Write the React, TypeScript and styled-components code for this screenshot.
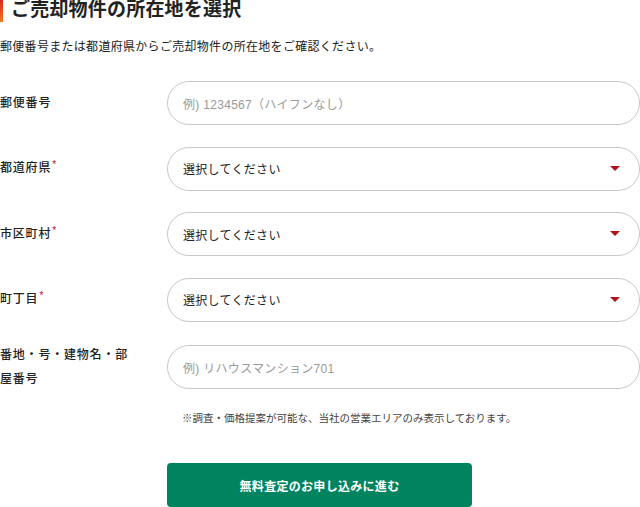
import React from "react";
import styled, { createGlobalStyle } from "styled-components";

const Global = createGlobalStyle`
  html, body { margin: 0; padding: 0; background: #fff; }
  body {
    font-family: "Liberation Sans", "Noto Sans CJK JP", sans-serif;
    color: #333;
    -webkit-font-smoothing: antialiased;
  }
  * { box-sizing: border-box; }
`;

const Page = styled.div`
  width: 640px;
  height: 507px;
  overflow: hidden;
  display: flex;
  flex-direction: column;
`;

const Heading = styled.h2`
  margin: 0;
  height: 22px;
  display: flex;
  align-items: flex-start;
  padding-left: 8px;
  border-left: 3px solid;
  border-image: linear-gradient(to bottom, #d7261f, #ef7d1a) 1;
  font-size: 19px;
  line-height: 19px;
  font-weight: 700;
  color: #222;
  letter-spacing: 0.2px;
`;

const Lead = styled.p`
  margin: 16px 0 0;
  font-size: 12px;
  line-height: 18px;
  letter-spacing: 0.3px;
  color: #222;
`;

const Rows = styled.div`
  margin-top: 25px;
  display: flex;
  flex-direction: column;
  gap: 21.5px;
`;

const Row = styled.div`
  display: flex;
  align-items: center;
`;

const Label = styled.label`
  width: 136px;
  flex: 0 0 136px;
  margin-right: 31px;
  font-size: 12px;
  line-height: 24px;
  letter-spacing: 0.8px;
  font-weight: 500;
  color: #222;
`;

const Req = styled.span`
  color: #d0021b;
  font-size: 10px;
  position: relative;
  top: -4px;
  margin-left: 1px;
`;

const FieldBox = styled.div`
  position: relative;
  flex: 1;
  height: 44px;
  border: 1px solid #c8c8c8;
  border-radius: 22px;
  display: flex;
  align-items: center;
  padding: 0 15px;
  font-size: 12px;
  letter-spacing: 0.3px;
`;

const Placeholder = styled.span`
  color: #9a9a9a;
`;

const Value = styled.span`
  color: #222;
`;

const Arrow = styled.span`
  position: absolute;
  right: 19px;
  top: 50%;
  margin-top: -3px;
  width: 0;
  height: 0;
  border-left: 5px solid transparent;
  border-right: 5px solid transparent;
  border-top: 5px solid #b0121b;
`;

const Note = styled.p`
  margin: 19px 0 0 182px;
  font-size: 10.5px;
  line-height: 16px;
  color: #444;
`;

const Button = styled.button`
  margin: 37px 0 0 167px;
  width: 305px;
  height: 44px;
  flex: 0 0 44px;
  border: none;
  border-radius: 4px;
  background: #00845f;
  color: #fff;
  font-family: inherit;
  font-size: 12px;
  font-weight: 700;
  letter-spacing: 0.3px;
`;

type F = { label: string; req?: boolean; kind: "input" | "select"; text: string };

const fields: F[] = [
  { label: "郵便番号", kind: "input", text: "例) 1234567（ハイフンなし）" },
  { label: "都道府県", req: true, kind: "select", text: "選択してください" },
  { label: "市区町村", req: true, kind: "select", text: "選択してください" },
  { label: "町丁目", req: true, kind: "select", text: "選択してください" },
  { label: "番地・号・建物名・部屋番号", kind: "input", text: "例) リハウスマンション701" },
];

export default function App() {
  return (
    <Page>
      <Global />
      <Heading>ご売却物件の所在地を選択</Heading>
      <Lead>郵便番号または都道府県からご売却物件の所在地をご確認ください。</Lead>
      <Rows>
        {fields.map((f) => (
          <Row key={f.label}>
            <Label>
              {f.label}
              {f.req && <Req>*</Req>}
            </Label>
            <FieldBox>
              {f.kind === "input" ? (
                <Placeholder>{f.text}</Placeholder>
              ) : (
                <>
                  <Value>{f.text}</Value>
                  <Arrow />
                </>
              )}
            </FieldBox>
          </Row>
        ))}
      </Rows>
      <Note>※調査・価格提案が可能な、当社の営業エリアのみ表示しております。</Note>
      <Button>無料査定のお申し込みに進む</Button>
    </Page>
  );
}
